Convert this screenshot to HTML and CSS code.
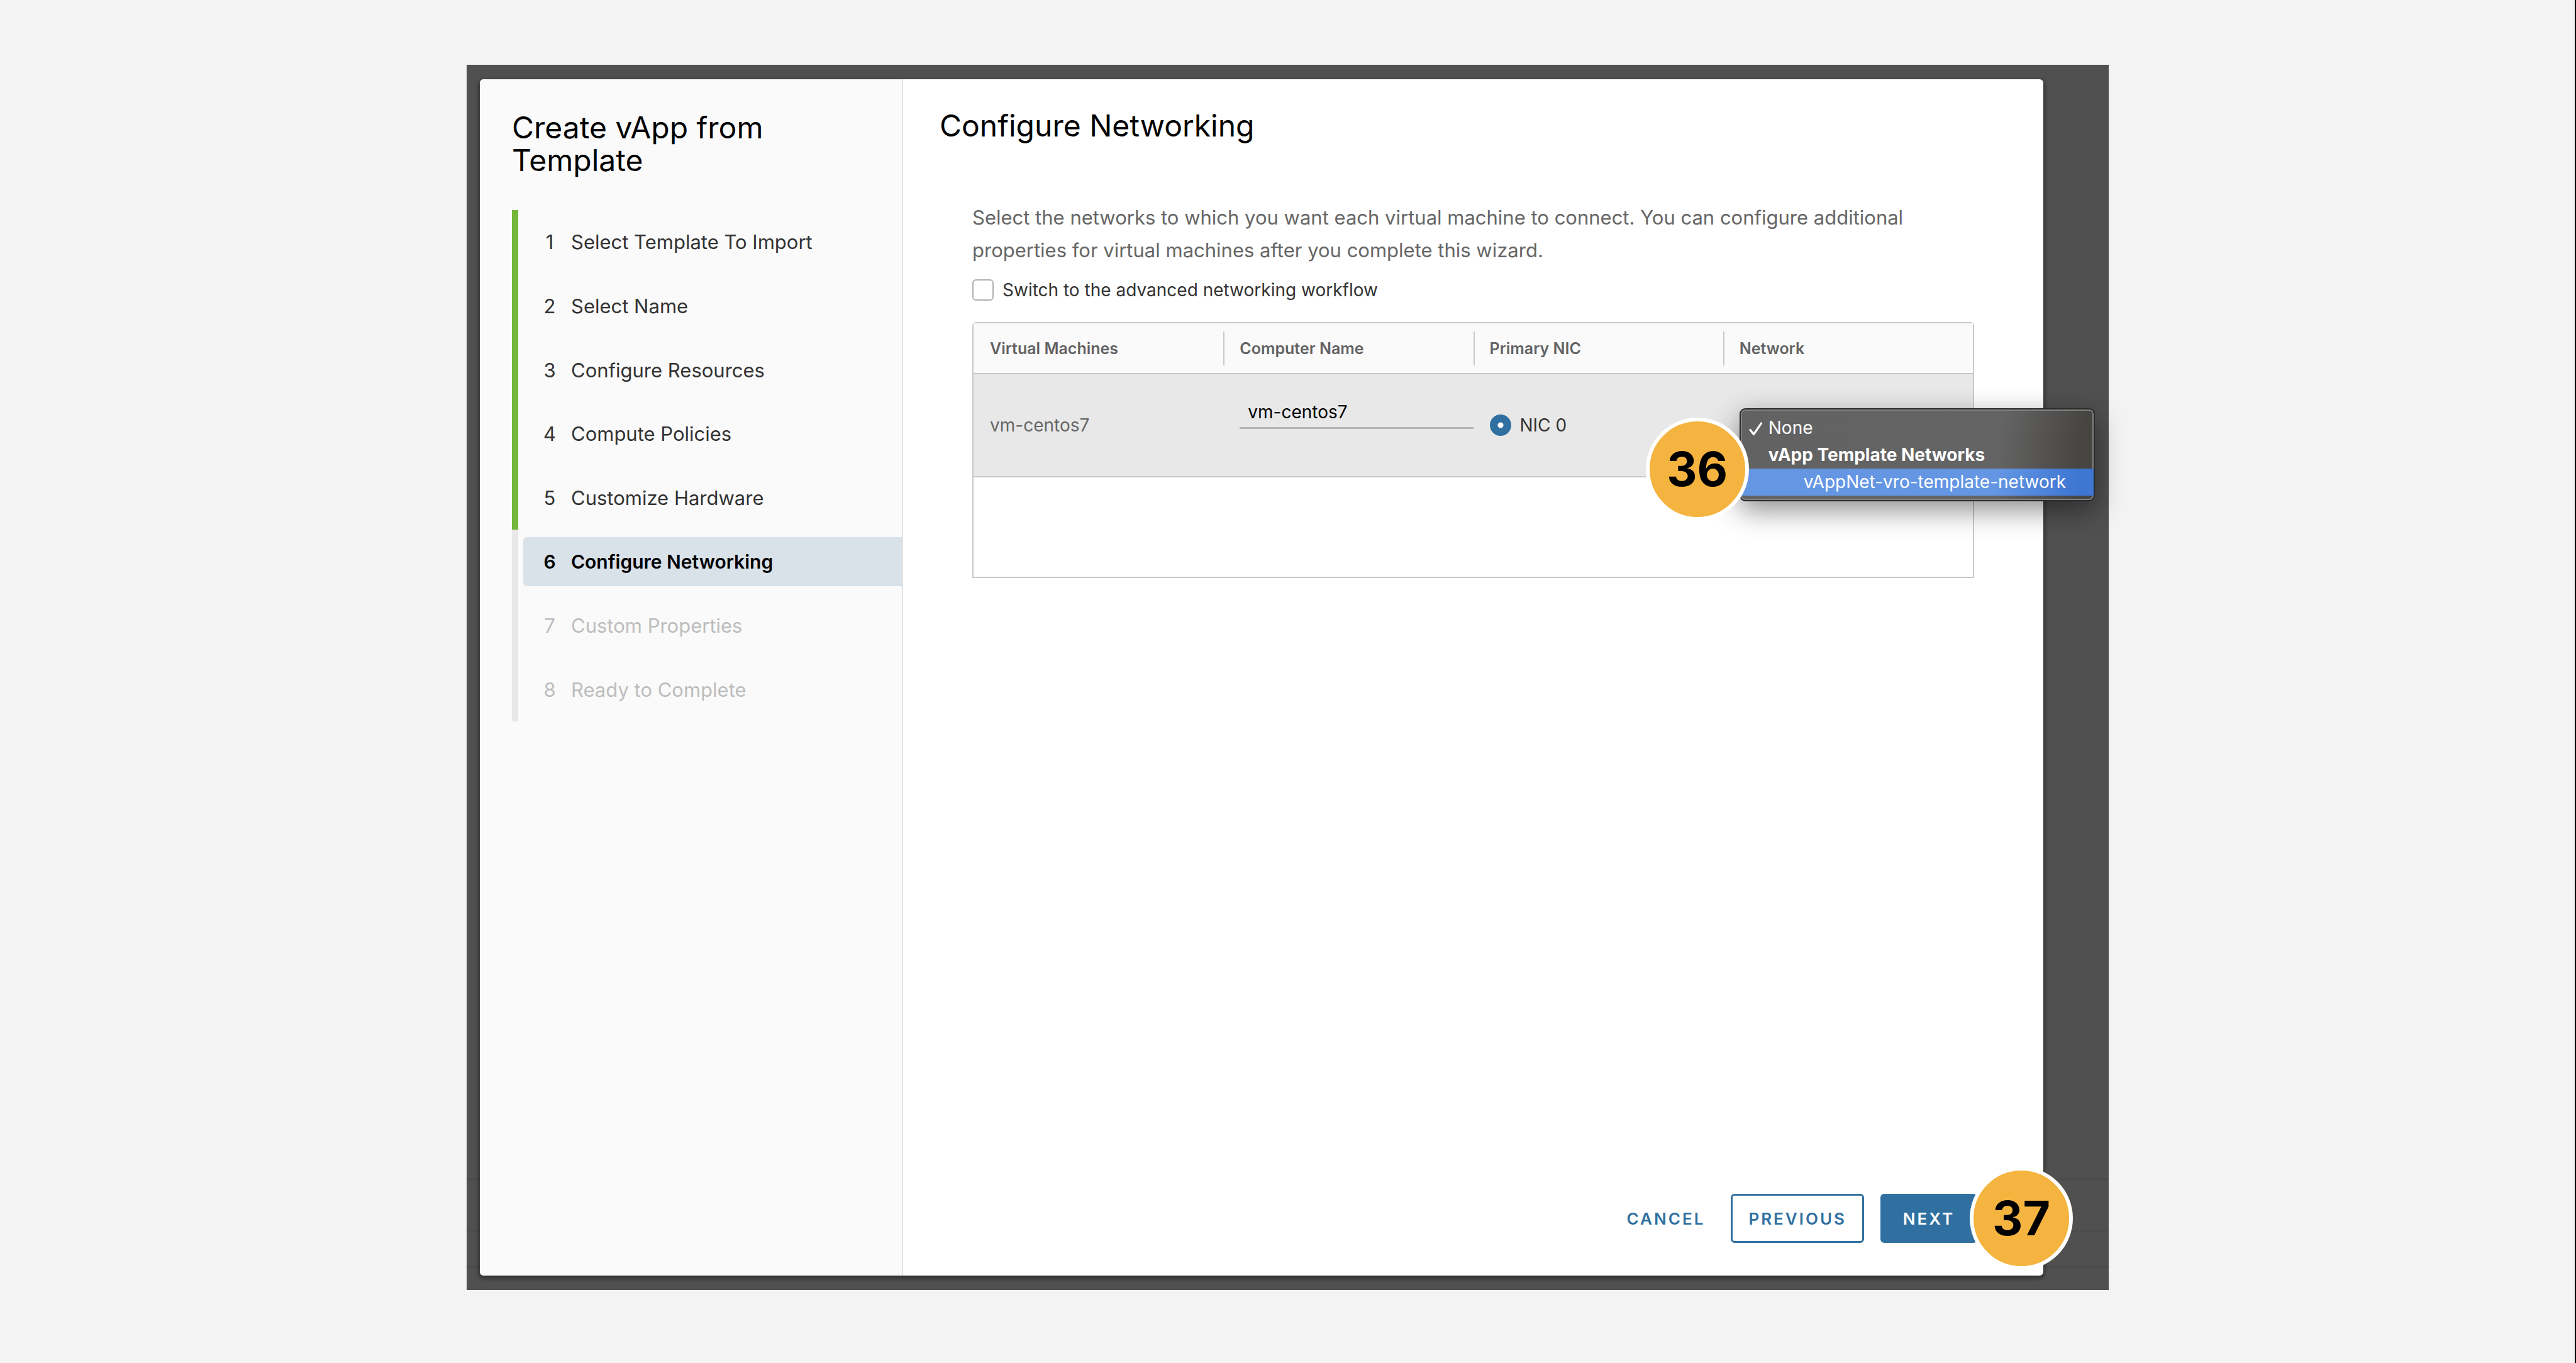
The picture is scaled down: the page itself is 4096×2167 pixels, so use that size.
FILE: index.html
```html
<!DOCTYPE html>
<html lang="en">
<head>
<meta charset="utf-8">
<title>Create vApp from Template</title>
<link rel="stylesheet" href="styles.css">
</head>
<body>
<div class="backdrop">
  <div class="wizard" role="dialog" aria-labelledby="wizard-title">
    <aside class="sidebar">
      <h1 class="title" id="wizard-title">Create vApp from Template</h1>
      <ol class="steps">
        <li class="step done"><button class="step-link" type="button"><span class="num">1</span><span>Select Template To Import</span></button></li>
        <li class="step done"><button class="step-link" type="button"><span class="num">2</span><span>Select Name</span></button></li>
        <li class="step done"><button class="step-link" type="button"><span class="num">3</span><span>Configure Resources</span></button></li>
        <li class="step done"><button class="step-link" type="button"><span class="num">4</span><span>Compute Policies</span></button></li>
        <li class="step done"><button class="step-link" type="button"><span class="num">5</span><span>Customize Hardware</span></button></li>
        <li class="step"><button class="step-link current" type="button" aria-current="step"><span class="num">6</span><span>Configure Networking</span></button></li>
        <li class="step"><button class="step-link" type="button" disabled><span class="num">7</span><span>Custom Properties</span></button></li>
        <li class="step"><button class="step-link" type="button" disabled><span class="num">8</span><span>Ready to Complete</span></button></li>
      </ol>
    </aside>
    <main class="page">
      <h2 class="title">Configure Networking</h2>
      <div class="page-body">
        <p class="intro">Select the networks to which you want each virtual machine to connect. You can configure additional properties for virtual machines after you complete this wizard.</p>
        <div class="choice">
          <input class="checkbox" type="checkbox" id="advanced">
          <label for="advanced">Switch to the advanced networking workflow</label>
        </div>
        <div class="datagrid">
          <table class="grid">
            <thead>
              <tr>
                <th scope="col"><div class="head">Virtual Machines</div></th>
                <th scope="col"><div class="head">Computer Name</div></th>
                <th scope="col"><div class="head">Primary NIC</div></th>
                <th scope="col"><div class="head">Network</div></th>
              </tr>
            </thead>
            <tbody>
              <tr>
                <td class="vm">vm-centos7</td>
                <td class="name"><input class="text" type="text" value="vm-centos7" aria-label="Computer Name"></td>
                <td>
                  <div class="choice">
                    <input class="radio" type="radio" name="nic" id="nic0" checked>
                    <label for="nic0">NIC 0</label>
                  </div>
                </td>
                <td class="network">
                  <div class="menu">
                    <select class="menu-list" size="3" aria-label="Network">
                      <option value="">None</option>
                      <optgroup label="vApp Template Networks">
                        <option class="highlight">vAppNet-vro-template-network</option>
                      </optgroup>
                    </select>
                    <svg class="tick" viewBox="0 0 24 26" aria-hidden="true"><path d="M3 14.500 8.500 21.500 20.500 4" fill="none" stroke="#fff" stroke-width="3.200" stroke-linecap="round" stroke-linejoin="round"/></svg>
                  </div>
                  <span class="badge badge-network">36</span>
                </td>
              </tr>
            </tbody>
          </table>
        </div>
      </div>
      <footer class="actions">
        <button class="btn btn-link" type="button">Cancel</button>
        <button class="btn btn-outline" type="button">Previous</button>
        <div class="next">
          <button class="btn btn-primary" type="button">Next</button>
          <span class="badge badge-next">37</span>
        </div>
      </footer>
    </main>
  </div>
</div>
</body>
</html>
```

FILE: styles.css
```css
* {
  box-sizing: border-box;
}

body {
  margin: 0;
  min-height: 100vh;
  display: flex;
  padding: 103px 741px 116px 742px;
  border-right: 2px solid #000;
  background: #f3f3f3;
  font-family: Inter, "Liberation Sans", sans-serif;
  font-size: 28px;
  color: #333;
}

button,
input,
select {
  font: inherit;
  color: inherit;
}

/* Dimmed application behind the dialog, with its faint row lines */
.backdrop {
  flex: 1;
  display: flex;
  padding: 23px 104px 23px 21px;
  background:
    linear-gradient(#4b4b4b, #4b4b4b) 0 calc(100% - 174px) / 100% 4px no-repeat,
    linear-gradient(#4b4b4b, #4b4b4b) 0 calc(100% - 93px) / 100% 2px no-repeat,
    linear-gradient(#4b4b4b, #4b4b4b) 0 calc(100% - 35px) / 100% 4px no-repeat,
    #505050;
}

.wizard {
  flex: 1;
  display: flex;
  background: #fff;
  border-radius: 6px;
  box-shadow: 0 3px 6px 2px rgba(0, 0, 0, 0.4);
}

.title {
  margin: 0;
  font-size: 48px;
  line-height: 52px;
  font-weight: 400;
  color: #000;
}

/* Step list */
.sidebar {
  width: 673px;
  padding: 51px 0 0 51px;
  background: #fafafa;
  border-right: 2px solid #e3e3e3;
  border-radius: 6px 0 0 6px;
}

.sidebar .title {
  max-width: 500px;
}

.steps {
  height: 813px;
  margin: 53px 0 0;
  padding: 0;
  list-style: none;
  display: grid;
  grid-auto-rows: 1fr;
}

.step {
  display: flex;
  align-items: center;
  padding-left: 8px;
  border-left: 10px solid #e8e8e8;
}

.step.done {
  border-left-color: #75b73b;
}

.step-link {
  flex: 1;
  height: 78px;
  display: flex;
  align-items: center;
  gap: 24px;
  padding: 0 0 0 32px;
  border: 0;
  border-radius: 6px 0 0 6px;
  background: none;
  font-size: 31px;
  text-align: left;
}

.step-link .num {
  width: 20px;
  display: flex;
  justify-content: center;
}

.step-link.current {
  background: #d9e1e9;
  color: #000;
  font-size: 30px;
  font-weight: 600;
}

.step-link:disabled {
  color: #bdbdbd;
}

/* Page */
.page {
  flex: 1;
  display: flex;
  flex-direction: column;
  padding: 48px 105px 52px 58px;
}

.page-body {
  padding: 94px 5px 0 52px;
}

.intro {
  max-width: 1540px;
  margin: 0 0 20px;
  font-size: 31px;
  line-height: 52px;
  color: #666;
}

.choice {
  display: flex;
  align-items: center;
  gap: 14px;
  line-height: 34px;
}

.checkbox,
.radio {
  appearance: none;
  flex: none;
  width: 34px;
  height: 34px;
  margin: 0;
}

.checkbox {
  border: 2px solid #b0b0b0;
  border-radius: 6px;
  background: #fff;
}

.radio {
  border-radius: 50%;
  background: radial-gradient(circle, #fff 4px, #3070a0 5px);
}

.datagrid {
  min-height: 407px;
  margin-top: 34px;
  border: 2px solid #c9c9c9;
  border-radius: 6px 6px 0 0;
}

.grid {
  width: 100%;
  table-layout: fixed;
  border-collapse: collapse;
}

.grid thead {
  background: #fafafa;
}

.grid tr {
  border-bottom: 2px solid #c9c9c9;
}

.grid th {
  height: 80px;
  padding: 0;
  color: #636363;
  font-size: 25px;
  font-weight: 600;
  text-align: left;
}

.head {
  padding-left: 26px;
  line-height: 54px;
}

th + th .head {
  padding-left: 24px;
  border-left: 2px solid #c9c9c9;
}

.grid tbody {
  background: #e8e8e8;
}

.grid td {
  height: 164px;
  padding: 0 0 0 26px;
}

.grid .vm {
  color: #666;
}

.grid .name {
  vertical-align: top;
  padding-top: 35px;
}

.text {
  display: block;
  width: 100%;
  height: 52px;
  padding: 0 13px;
  border: 0;
  border-bottom: 3px solid #b3b3b3;
  background: none;
  color: #000;
}

/* Open network menu, floating over the row */
.network {
  position: relative;
}

.menu {
  position: absolute;
  z-index: 1;
  top: 54px;
  left: 26px;
  width: 565px;
  border: 2px solid #2a2a2a;
  border-radius: 9px;
  background: linear-gradient(97deg, #626262 0, #646464 72%, #474542 95%);
  box-shadow: inset 0 0 0 2px #828282, 0 14px 44px rgba(0, 0, 0, 0.45);
}

.menu-list {
  appearance: none;
  display: block;
  width: 100%;
  height: 144px;
  padding: 8px 0 7px;
  border: 0;
  background: none;
  color: #fff;
  overflow: hidden;
}

.menu-list option {
  padding: 4px 0 5px 44px;
  color: #fff;
}

.menu-list optgroup {
  padding: 4px 0 0 42px;
  color: #fff;
  font-weight: 700;
}

.menu-list .highlight {
  margin: 4px 0 0 -42px;
  padding-left: 100px;
  background: linear-gradient(97deg, #6496e4 0, #6496e4 72%, #3e76d2 95%);
  font-weight: 400;
}

.tick {
  position: absolute;
  top: 18px;
  left: 12px;
  width: 24px;
  height: 26px;
}

/* Numbered callouts */
.badge {
  position: absolute;
  z-index: 2;
  width: 164px;
  height: 164px;
  border: 6px solid #fff;
  border-radius: 50%;
  background: #f5b33f;
  color: #000;
  font-size: 75px;
  line-height: 152px;
  font-weight: 700;
  text-align: center;
}

.badge-network {
  top: 69px;
  left: -123px;
}

.badge-next {
  top: -43px;
  right: -152px;
}

/* Footer buttons */
.actions {
  margin-top: auto;
  display: flex;
  justify-content: flex-end;
  gap: 26px;
}

.next {
  position: relative;
}

.btn {
  height: 78px;
  padding: 0 25px;
  border: 3px solid transparent;
  border-radius: 6px;
  background: none;
  color: #3070a0;
  font-size: 26px;
  font-weight: 600;
  letter-spacing: 3px;
  text-transform: uppercase;
}

.btn-link {
  padding: 0 12px;
}

.btn-outline {
  border-color: #3070a0;
}

.btn-primary {
  min-width: 154px;
  background: #3070a0;
  color: #fff;
}
```
